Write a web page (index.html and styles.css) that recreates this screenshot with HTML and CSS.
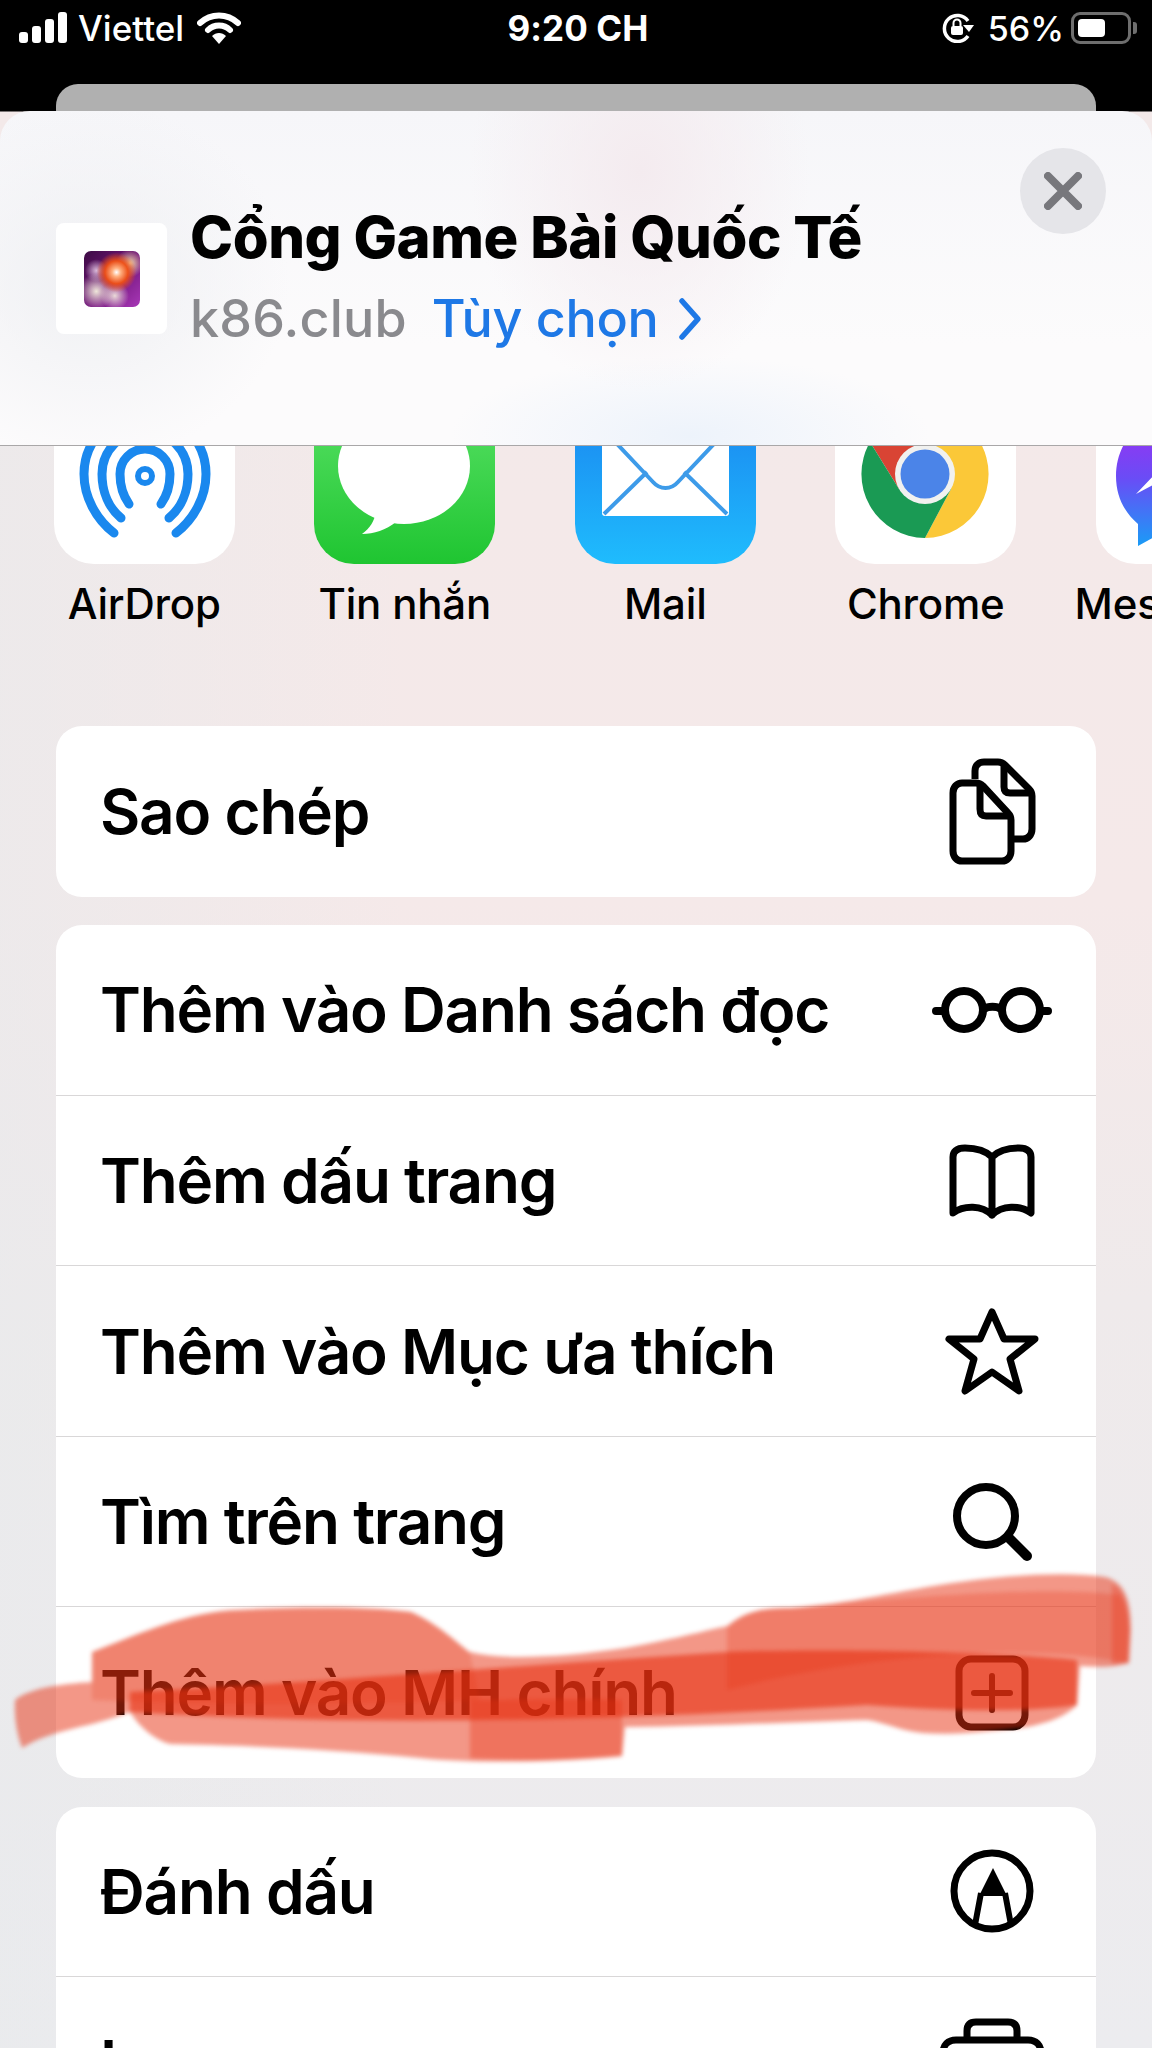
FILE: index.html
```html
<!DOCTYPE html>
<html lang="vi">
<head>
    <meta charset="UTF-8">
    <meta name="viewport" content="width=device-width, initial-scale=1.0">
    <title>Share sheet</title>
    <link rel="stylesheet" href="styles.css">
</head>
<body>
    <div class="status">
        <div class="status-left">
            <svg class="signal" width="48" height="32" viewBox="0 0 48 32"><rect x="0" y="20" width="9" height="11" rx="3"/><rect x="13" y="14" width="9" height="17" rx="3"/><rect x="26" y="7" width="9" height="24" rx="3"/><rect x="39" y="0" width="9" height="31" rx="3"/></svg>
            <span>Viettel</span>
            <svg class="wifi" width="44" height="32" viewBox="0 0 44 32"><path d="M3 11C14 1 30 1 41 11" fill="none" stroke="#fff" stroke-width="6" stroke-linecap="round"/><path d="M11 18C17 12 27 12 33 18" fill="none" stroke="#fff" stroke-width="6" stroke-linecap="round"/><path d="M15 24C19 20 25 20 29 24L22 32Z"/></svg>
        </div>
        <div class="status-time">9:20 CH</div>
        <div class="status-right">
            <svg class="lock" width="32" height="30" viewBox="0 0 32 30"><path d="M26 23A13 13 0 1 1 26 8" fill="none" stroke="#fff" stroke-width="3.5"/><path d="M21 12H32L27 19Z"/><rect x="9" y="13" width="12" height="9" rx="2"/><path d="M11.5 13V10A3.5 3.5 0 0 1 18.5 10V13" fill="none" stroke="#fff" stroke-width="2"/></svg>
            <span>56%</span>
            <div class="battery"><div class="battery-fill"></div></div>
            <div class="battery-nub"></div>
        </div>
    </div>

    <div class="back-card"></div>

    <div class="header">
        <div class="favicon"><div class="favicon-img"></div></div>
        <div class="header-text">
            <div class="header-title">Cổng Game Bài Quốc Tế</div>
            <div class="header-sub">
                <span class="domain">k86.club</span>
                <span class="options">Tùy chọn</span>
                <svg width="24" height="44" viewBox="0 0 24 44"><path d="M4 4L20 22L4 40" fill="none" stroke="#1e78e6" stroke-width="5.5" stroke-linecap="round" stroke-linejoin="round"/></svg>
            </div>
        </div>
        <div class="close">
            <svg width="38" height="38" viewBox="0 0 38 38"><path d="M4 4L34 34M34 4L4 34" stroke="#77777c" stroke-width="8" stroke-linecap="round"/></svg>
        </div>
    </div>

    <div class="apps">
        <div class="app">
            <div class="app-icon">
                <svg width="181" height="180" viewBox="0 0 181 180" fill="none" stroke="#1a88ee" stroke-linecap="round" stroke-width="9">
                    <path d="M60 149C42 135 30 113 30 90A61 61 0 0 1 152 90C152 113 140 135 122 149"/>
                    <path d="M67 134C55 124 48 108 48 90A43 43 0 0 1 134 90C134 108 127 124 115 134"/>
                    <path d="M75 120C70 113 66 102 66 90A25 25 0 0 1 116 90C116 102 112 113 107 120"/>
                    <circle cx="91" cy="92" r="7" stroke-width="6"/>
                </svg>
            </div>
            <div class="app-label">AirDrop</div>
        </div>
        <div class="app">
            <div class="app-icon icon-messages">
                <svg width="181" height="180" viewBox="0 0 181 180"><ellipse cx="90" cy="82" rx="66" ry="58" fill="#fff"/><path d="M62 128C60 138 56 144 48 150C60 150 72 146 82 138Z" fill="#fff"/></svg>
            </div>
            <div class="app-label">Tin nhắn</div>
        </div>
        <div class="app">
            <div class="app-icon icon-mail">
                <svg width="181" height="180" viewBox="0 0 181 180"><rect x="27" y="42" width="127" height="90" rx="3" fill="#fff"/><path d="M27 44L78 98C85 106 96 106 103 98L154 44M29 130L72 88M152 130L109 88" fill="none" stroke="#3d9be9" stroke-width="4"/></svg>
            </div>
            <div class="app-label">Mail</div>
        </div>
        <div class="app">
            <div class="app-icon">
                <svg width="181" height="180" viewBox="0 0 181 180">
                    <path d="M35 58A64 64 0 0 1 145 58H90L64 105Z" fill="#d94434"/>
                    <path d="M145 58A64 64 0 0 1 90 154L116 105L90 58Z" fill="#fbc838"/>
                    <path d="M90 154A64 64 0 0 1 35 58L64 105L116 105Z" fill="#1a9a54"/>
                    <circle cx="90" cy="90" r="30" fill="#f1f1ef"/>
                    <circle cx="90" cy="90" r="24.500" fill="#4b84e8"/>
                </svg>
            </div>
            <div class="app-label">Chrome</div>
        </div>
        <div class="app">
            <div class="app-icon">
                <svg width="181" height="180" viewBox="0 0 181 180"><defs><linearGradient id="msgr" x1="0" y1="0" x2="0" y2="1"><stop offset="0" stop-color="#a52cf0"/><stop offset="0.5" stop-color="#6a4cf6"/><stop offset="1" stop-color="#1a9cf6"/></linearGradient></defs><path d="M90 26C50 26 20 54 20 92C20 112 28 128 42 140V162L64 150C72 152 80 154 90 154C130 154 160 126 160 90C160 54 130 26 90 26Z" fill="url(#msgr)"/><path d="M40 110L78 70L98 90L136 70L98 110L78 90Z" fill="#fff"/></svg>
            </div>
            <div class="app-label">Messenger</div>
        </div>
    </div>

    <div class="group">
        <div class="row">
            <span>Sao chép</span>
            <div class="row-icon">
                <svg width="120" height="120" viewBox="0 0 120 120" fill="none" stroke="#000" stroke-width="7" stroke-linejoin="round">
                    <path d="M43 28V20C43 14 47 11 52 11H66C69 11 71 12 73 14L97 38C99 40 100 42 100 45V78C100 84 96 88 91 88H80"/>
                    <path d="M72 13V36C72 40 74 42 78 42H99"/>
                    <path d="M30 32H44C47 32 49 33 51 35L76 62C78 64 79 66 79 69V100C79 106 75 110 70 110H30C25 110 21 106 21 100V42C21 36 25 32 30 32Z"/>
                    <path d="M48 33V58C48 63 50 65 54 65H78"/>
                </svg>
            </div>
        </div>
    </div>

    <div class="group">
        <div class="row">
            <span>Thêm vào Danh sách đọc</span>
            <div class="row-icon">
                <svg width="120" height="60" viewBox="0 0 120 60" fill="none" stroke="#000" stroke-width="8" stroke-linecap="round">
                    <circle cx="32" cy="30" r="19"/>
                    <circle cx="89" cy="30" r="19"/>
                    <path d="M4 31H12M52 29C56 26 65 26 69 29M109 31H116"/>
                </svg>
            </div>
        </div>
        <div class="row">
            <span>Thêm dấu trang</span>
            <div class="row-icon">
                <svg width="120" height="90" viewBox="0 0 120 90" fill="none" stroke="#000" stroke-width="7" stroke-linecap="round" stroke-linejoin="round">
                    <path d="M60 22C52 14 42 13 33 13C24 13 21 17 21 22V78C32 70 50 70 60 80C70 70 88 70 99 78V22C99 17 96 13 87 13C78 13 68 14 60 22V80"/>
                </svg>
            </div>
        </div>
        <div class="row">
            <span>Thêm vào Mục ưa thích</span>
            <div class="row-icon">
                <svg width="120" height="100" viewBox="0 0 120 100" fill="none" stroke="#000" stroke-width="7" stroke-linejoin="round">
                    <path d="M60 11L72 38H103L78 58L87 90L60 71L33 90L42 58L17 38H48Z"/>
                </svg>
            </div>
        </div>
        <div class="row">
            <span>Tìm trên trang</span>
            <div class="row-icon">
                <svg width="120" height="100" viewBox="0 0 120 100" fill="none" stroke="#000" stroke-linecap="round">
                    <circle cx="54" cy="44" r="29" stroke-width="8"/>
                    <path d="M77 66L95 84" stroke-width="10"/>
                </svg>
            </div>
        </div>
        <div class="row">
            <span>Thêm vào MH chính</span>
            <div class="row-icon">
                <svg width="120" height="90" viewBox="0 0 120 90" fill="none" stroke="#000" stroke-linecap="round">
                    <rect x="27" y="11" width="66" height="68" rx="12" stroke-width="7"/>
                    <path d="M60 28V62M42 45H78" stroke-width="6"/>
                </svg>
            </div>
        </div>
    </div>

    <div class="group">
        <div class="row">
            <span>Đánh dấu</span>
            <div class="row-icon">
                <svg width="120" height="100" viewBox="0 0 120 100" fill="none" stroke="#000" stroke-width="7">
                    <circle cx="60" cy="50" r="38"/>
                    <path d="M49 52L43 84M73 52L79 84" stroke-width="6"/>
                    <path d="M61 27L75 55H47Z" fill="#000" stroke="none"/>
                </svg>
            </div>
        </div>
        <div class="row">
            <span>In</span>
            <div class="row-icon">
                <svg width="120" height="100" viewBox="0 0 120 100" fill="none" stroke="#000" stroke-width="7">
                    <path d="M35 28V19C35 13 38 10 44 10H76C82 10 85 13 85 19V28"/>
                    <path d="M24 28H96C104 28 109 33 109 41V80C109 88 104 93 96 93H24C16 93 11 88 11 80V41C11 33 16 28 24 28Z"/>
                </svg>
            </div>
        </div>
    </div>

    <svg class="scribble" width="1152" height="220" viewBox="0 1550 1152 220">
        <g fill="#e83010">
            <path opacity="0.5" d="M15 1700C30 1688 60 1684 92 1682L92 1652C130 1638 180 1614 230 1610C300 1606 370 1606 411 1612C440 1625 458 1644 470 1652C500 1660 560 1658 625 1648C670 1640 700 1632 727 1626C745 1612 760 1608 790 1608C850 1604 900 1590 960 1582C1020 1574 1070 1572 1105 1577C1125 1582 1131 1600 1131 1630L1129 1663C1110 1668 1095 1667 1080 1666L1077 1705C1060 1722 1030 1728 1000 1730C960 1734 930 1736 905 1730C890 1726 880 1722 867 1720C800 1722 700 1726 625 1727L622 1756C560 1762 480 1764 420 1758C340 1750 240 1745 170 1744C155 1740 140 1728 130 1712C90 1728 55 1728 22 1748C16 1732 14 1716 15 1700Z"/>
            <path opacity="0.2" d="M92 1652C130 1638 180 1614 230 1612C300 1608 370 1608 411 1612C440 1625 458 1644 470 1654L480 1700C360 1705 200 1705 92 1700Z"/>
            <path opacity="0.6" d="M130 1692C300 1684 480 1668 727 1652C830 1648 1000 1652 1077 1660L1077 1705C1030 1712 960 1712 867 1705C700 1715 420 1730 130 1712Z"/>
            <path opacity="0.25" d="M727 1628C745 1612 760 1608 790 1608C900 1598 1040 1585 1120 1595C1131 1610 1130 1640 1129 1663C1040 1645 880 1650 727 1690Z"/>
            <path opacity="0.35" d="M470 1700C520 1700 580 1698 622 1700L622 1756C580 1760 530 1762 470 1758Z"/>
            <path opacity="0.3" d="M1112 1584C1124 1590 1129 1606 1129 1630L1127 1663L1112 1665Z"/>
        </g>
    </svg>
</body>
</html>
```

FILE: styles.css
```css
* {
    box-sizing: border-box;
}
html, body {
    margin: 0;
    padding: 0;
}
body {
    position: relative;
    width: 1152px;
    height: 2048px;
    overflow: hidden;
    font-family: Inter, "Noto Sans", sans-serif;
    color: #000;
    background:
        linear-gradient(90deg, rgba(232, 234, 236, 0.6), rgba(232, 234, 236, 0) 35%) 0 446px / 100% 1602px no-repeat,
        linear-gradient(180deg, #000 0, #000 111px, #f3e9e9 112px, #f5e9e9 900px, #efeaeb 1300px, #ececef 2048px);
}

/* status bar */
.status {
    display: grid;
    grid-template-columns: 1fr auto 1fr;
    align-items: center;
    height: 84px;
    padding: 0 15px 28px 19px;
    color: #fff;
    font-size: 35px;
    font-weight: 500;
    background: #000;
}
.status svg {
    fill: #fff;
    display: block;
}
.status-left, .status-right {
    display: flex;
    align-items: center;
}
.status-left span {
    margin: 0 13px 0 11px;
}
.status-time {
    font-weight: 700;
    letter-spacing: 0.1px;
}
.status-right {
    justify-content: flex-end;
    font-size: 34px;
}
.status-right span {
    margin: 0 7px 0 14px;
}
.battery {
    width: 60px;
    height: 32px;
    padding: 4px;
    border: 3px solid #6e6e6e;
    border-radius: 9px;
}
.battery-fill {
    width: 27px;
    height: 100%;
    background: #fff;
    border-radius: 4px;
}
.battery-nub {
    width: 4px;
    height: 12px;
    margin-left: 2px;
    background: #6e6e6e;
    border-radius: 0 3px 3px 0;
}

.back-card {
    height: 27px;
    margin: 0 56px;
    background: #b0b0b0;
    border-radius: 22px 22px 0 0;
}

/* header */
.header {
    position: relative;
    display: flex;
    align-items: flex-start;
    height: 335px;
    padding: 112px 0 0 56px;
    border-bottom: 1px solid #a9a7a8;
    border-radius: 30px 30px 0 0;
    background:
        radial-gradient(ellipse 170px 220px at 640px 60px, #f4ebef 0, rgba(244, 235, 239, 0) 100%),
        radial-gradient(ellipse 240px 80px at 690px 325px, #edf3fb 0, rgba(237, 243, 251, 0) 100%),
        radial-gradient(ellipse 200px 180px at 90px 170px, #eff0f3 0, rgba(239, 240, 243, 0) 100%),
        linear-gradient(180deg, #f6f6f9, #fcfbfc 70%);
}
.favicon {
    display: flex;
    align-items: center;
    justify-content: center;
    flex-shrink: 0;
    width: 111px;
    height: 111px;
    background: #fff;
    border-radius: 8px;
}
.favicon-img {
    width: 56px;
    height: 56px;
    border-radius: 7px;
    filter: blur(0.7px);
    background:
        radial-gradient(circle at 58% 38%, #fff 0, #ffb080 9%, rgba(240, 80, 20, 0.95) 24%, rgba(240, 80, 20, 0) 42%),
        radial-gradient(circle at 82% 22%, #f2d8a8 0, rgba(242, 216, 168, 0) 22%),
        radial-gradient(circle at 22% 72%, #efe6da 0, rgba(239, 230, 218, 0) 30%),
        radial-gradient(circle at 55% 80%, #eadad8 0, rgba(234, 218, 216, 0) 26%),
        radial-gradient(circle at 22% 35%, #d8b8d8 0, rgba(216, 184, 216, 0) 20%),
        linear-gradient(135deg, #3c0c44, #701478 50%, #a838b8);
}
.header-text {
    margin-left: 23px;
    margin-top: -24px;
}
.header-title {
    font-size: 58px;
    font-weight: 800;
    letter-spacing: -0.45px;
    line-height: 76px;
    white-space: nowrap;
}
.header-sub {
    display: flex;
    align-items: center;
    margin-top: 6px;
    font-size: 52px;
    font-weight: 500;
    letter-spacing: -0.3px;
    line-height: 76px;
}
.domain {
    color: #8a8a8e;
    letter-spacing: 0.2px;
}
.options {
    margin-left: 25px;
    margin-right: 19px;
    color: #1e78e6;
}
.close {
    position: absolute;
    top: 37px;
    left: 1020px;
    display: flex;
    align-items: center;
    justify-content: center;
    width: 86px;
    height: 86px;
    border-radius: 50%;
    background: #e5e5e9;
}

/* app row */
.apps {
    display: flex;
    height: 280px;
    padding-left: 14px;
    overflow: hidden;
}
.app {
    flex-shrink: 0;
    width: 260.5px;
    text-align: center;
}
.app-icon {
    width: 181px;
    height: 180px;
    margin: -62px auto 0;
    background: #fff;
    border-radius: 40px;
}
.icon-messages {
    background: linear-gradient(180deg, #5ee36a, #1fc531);
}
.icon-mail {
    background: linear-gradient(180deg, #1a7fee, #1fbcfd);
}
.app-label {
    margin-top: 16px;
    font-size: 42px;
    font-weight: 500;
    letter-spacing: -0.2px;
    line-height: 48px;
    white-space: nowrap;
}

/* action rows */
.group {
    margin: 0 56px 28.5px;
    background: #fff;
    border-radius: 26px;
    overflow: hidden;
}
.row {
    display: flex;
    align-items: center;
    justify-content: space-between;
    height: 170.6px;
    padding: 0 44px;
    font-size: 62px;
    font-weight: 600;
    letter-spacing: -1.2px;
    white-space: nowrap;
    border-bottom: 1px solid #d9d7d8;
}
.row:last-child {
    border-bottom: none;
}
.row-icon {
    display: flex;
    justify-content: center;
    width: 120px;
}
.row-icon svg {
    display: block;
}

/* red marker over the page */
.scribble {
    position: absolute;
    left: 0;
    top: 1550px;
    filter: blur(2px);
}
```
